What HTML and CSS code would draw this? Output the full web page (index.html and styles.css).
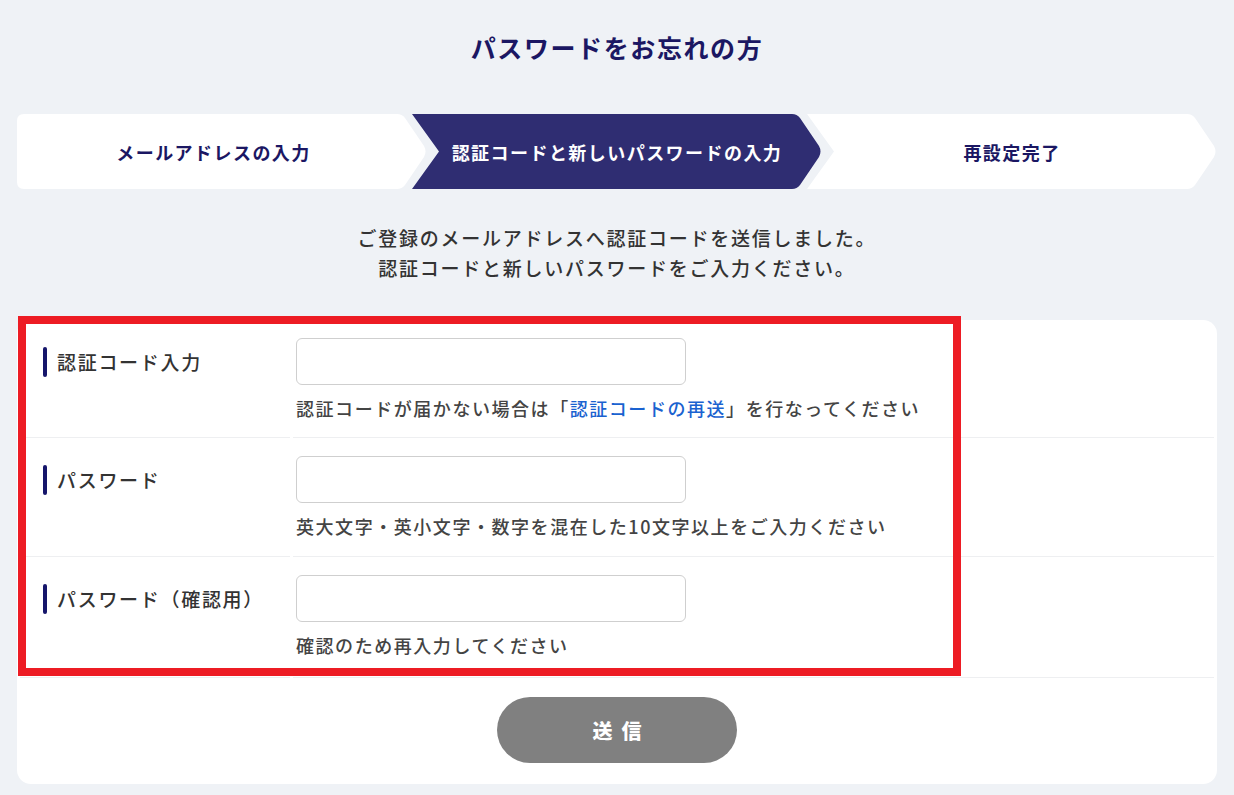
FILE: index.html
```html
<!DOCTYPE html>
<html lang="ja">
<head>
<meta charset="utf-8">
<title>パスワードをお忘れの方</title>
<link rel="stylesheet" href="styles.css">
</head>
<body>
<main class="page">
  <h1 class="title">パスワードをお忘れの方</h1>

  <ol class="steps">
    <li class="step step-first">メールアドレスの入力</li>
    <li class="step step-active">認証コードと新しいパスワードの入力</li>
    <li class="step step-last">再設定完了</li>
  </ol>

  <p class="lead">ご登録のメールアドレスへ認証コードを送信しました。<br>認証コードと新しいパスワードをご入力ください。</p>

  <form class="card">
    <div class="highlight"></div>
    <div class="row">
      <div class="label-cell"><span class="label">認証コード入力</span></div>
      <div class="field-cell">
        <input class="input" type="text">
        <p class="hint">認証コードが届かない場合は「<a class="link" href="#">認証コードの再送</a>」を行なってください</p>
      </div>
    </div>
    <div class="row row-mid">
      <div class="label-cell"><span class="label">パスワード</span></div>
      <div class="field-cell">
        <input class="input" type="password">
        <p class="hint">英大文字・英小文字・数字を混在した10文字以上をご入力ください</p>
      </div>
    </div>
    <div class="row row-last">
      <div class="label-cell"><span class="label">パスワード（確認用）</span></div>
      <div class="field-cell">
        <input class="input" type="password">
        <p class="hint">確認のため再入力してください</p>
      </div>
    </div>
    <div class="actions">
      <button class="submit" type="button">送信</button>
    </div>
  </form>
</main>
</body>
</html>
```

FILE: styles.css
```css
* { box-sizing: border-box; }

html, body {
  margin: 0;
  padding: 0;
}

body {
  background: #eff2f6;
  font-family: "Noto Sans CJK JP", "Noto Sans", sans-serif;
  color: #333;
}

.page {
  width: 1200px;
  margin: 0 auto;
  padding-top: 29px;
}

.title {
  margin: 0;
  text-align: center;
  font-size: 25px;
  line-height: 36px;
  font-weight: 700;
  letter-spacing: 1.6px;
  color: #1b1763;
}

.steps {
  list-style: none;
  margin: 49px 0 0;
  padding: 0;
  display: flex;
}

.step {
  flex: 0 0 410px;
  height: 75px;
  display: flex;
  align-items: center;
  justify-content: center;
  font-size: 18px;
  font-weight: 700;
  letter-spacing: 1.45px;
  background: #fff;
  color: #1b1763;
  margin-left: -15px;
  clip-path: path('M0,0 H380 Q385,0 388,4 L407,32 Q410,37.5 407,43 L388,71 Q385,75 380,75 H0 L27,37.5 Z');
}

.step-first {
  margin-left: 0;
  padding-right: 17px;
  clip-path: path('M7,0 H380 Q385,0 388,4 L407,32 Q410,37.5 407,43 L388,71 Q385,75 380,75 H7 Q0,75 0,68 V7 Q0,0 7,0 Z');
}

.step-active {
  background: #2f2d72;
  color: #fff;
}

.lead {
  margin: 34px 0 0;
  text-align: center;
  font-size: 19px;
  font-weight: 500;
  line-height: 30px;
  letter-spacing: 1.75px;
  color: #333;
}

.card {
  position: relative;
  margin: 37px 0 0;
  background: #fff;
  border-radius: 14px;
  padding: 0 3px;
}

.highlight {
  position: absolute;
  left: 1px;
  top: -4px;
  width: 943px;
  height: 360px;
  border: 8px solid #ed1c24;
  pointer-events: none;
}

.row {
  display: grid;
  grid-template-columns: 270px 1fr;
  column-gap: 3px;
}

.label-cell,
.field-cell {
  border-bottom: 1px solid #eeeff1;
}

.label-cell {
  padding: 18px 0 0 23px;
}

.label {
  height: 47px;
  display: flex;
  align-items: center;
  gap: 10px;
  font-size: 19px;
  font-weight: 500;
  letter-spacing: 1.7px;
  color: #333;
}

.label::before {
  content: "";
  width: 4px;
  height: 30px;
  border-radius: 2px;
  background: #16166b;
}

.field-cell {
  padding: 18px 0 14px 3px;
}

.row-mid .field-cell {
  padding-bottom: 15px;
}

.row-last .field-cell {
  padding-bottom: 17px;
}

.input {
  display: block;
  width: 390px;
  height: 47px;
  border: 1px solid #cfcfcf;
  border-radius: 6px;
  background: #fff;
  font: inherit;
  padding: 0 12px;
}

.hint {
  margin: 8px 0 0;
  font-size: 18px;
  font-weight: 500;
  line-height: 30px;
  letter-spacing: 1.55px;
  color: #444;
}

.link {
  color: #1a62d0;
  text-decoration: none;
}

.actions {
  display: flex;
  justify-content: center;
  padding: 19px 0 21px;
}

.submit {
  width: 240px;
  height: 66px;
  border: 0;
  border-radius: 33px;
  background: #808080;
  color: #fff;
  font-family: inherit;
  font-size: 20px;
  font-weight: 900;
  letter-spacing: 9px;
  padding: 0 0 0 9px;
}
```
